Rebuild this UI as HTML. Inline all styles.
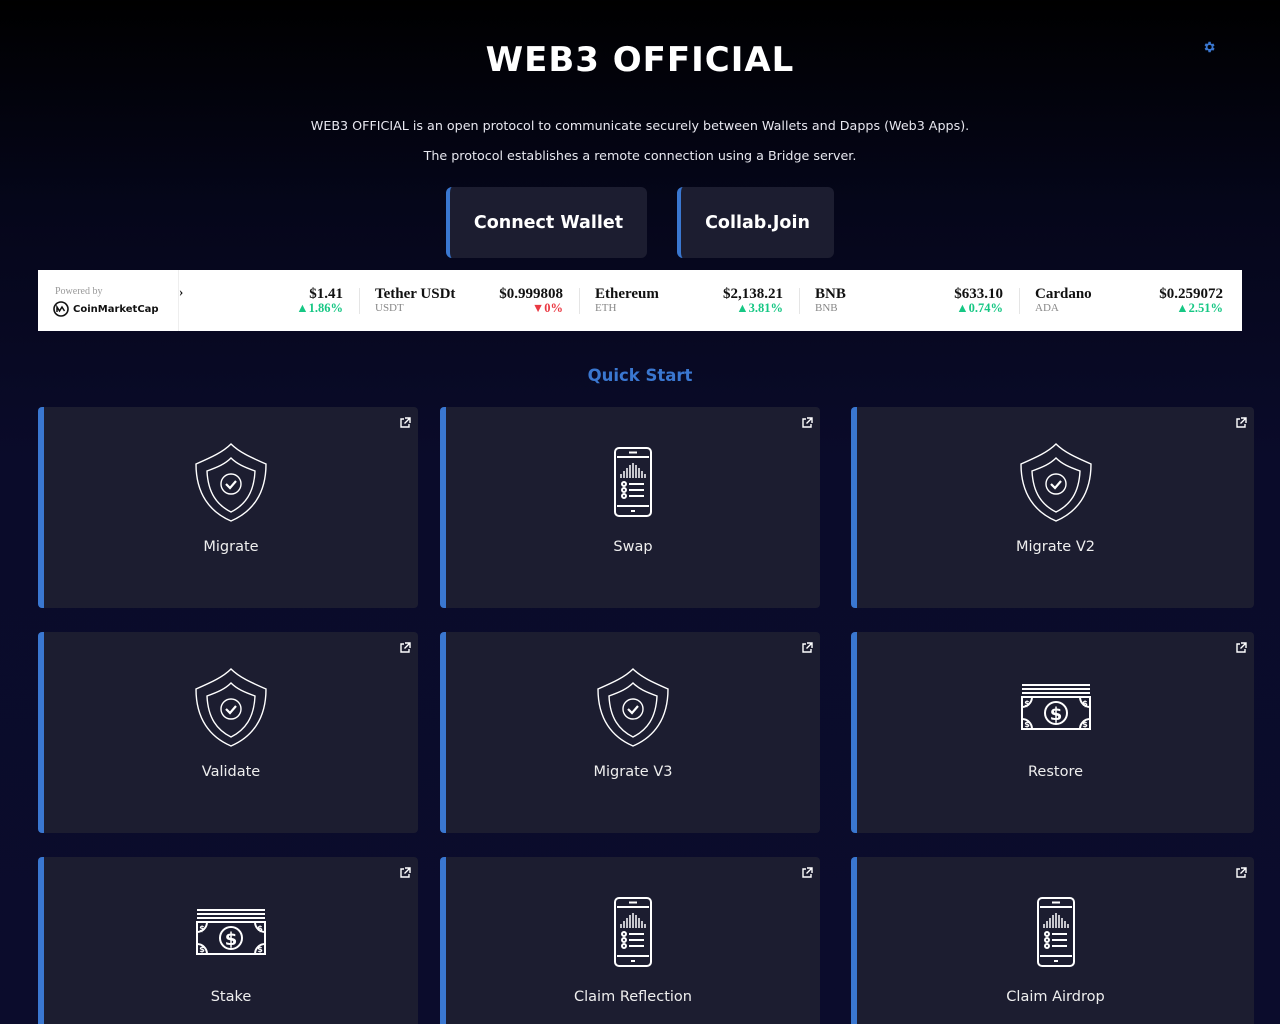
<!DOCTYPE html>
<html style="width:1280px;height:1024px;overflow:hidden"><head><meta charset="utf-8"><style>
*{margin:0;padding:0;box-sizing:border-box}
body{width:1280px;height:1024px;overflow:hidden;font-family:"DejaVu Sans","Liberation Sans",sans-serif;color:#fff;background:linear-gradient(180deg,#000 0%,#05061a 20%,#0a0b2a 45%,#0b0c2c 100%);position:relative}
h1{position:absolute;top:40px;left:0;width:1280px;text-align:center;font-size:34px;font-weight:bold;letter-spacing:1px}
.p{position:absolute;left:0;width:1280px;text-align:center;font-size:12.7px;color:#e8e8f0}
.btn{position:absolute;top:187px;height:71px;background:#1c1d30;border-left:4px solid #3a77d0;border-radius:6px;font-weight:bold;font-size:17.5px;display:flex;align-items:center;justify-content:center}
.gear{position:absolute;left:1202px;top:40px}
.tick{position:absolute;left:38px;top:270px;width:1204px;height:61px;background:#fff;font-family:"Liberation Serif",serif;color:#111}
.cmc{position:absolute;left:0;top:0;width:141px;height:61px;border-right:1px solid #eee}
.it{position:absolute;top:16px;height:30px}
.nm{position:absolute;left:0;top:0;font-weight:bold;font-size:15px;white-space:nowrap}
.sy{position:absolute;left:0;top:16px;font-size:11px;color:#888}
.pr{position:absolute;right:0;top:0;font-weight:bold;font-size:15px;white-space:nowrap}
.ch{position:absolute;right:0;top:15px;font-weight:bold;font-size:12.5px;color:#16c784;white-space:nowrap}
.ch.r{color:#ea3943}
.sep{position:absolute;top:18px;width:1px;height:26px;background:#e5e5e5}
.qs{position:absolute;top:366px;left:0;width:1280px;text-align:center;color:#3a77d0;font-weight:bold;font-size:16.5px}
.card{position:absolute;background:#1c1d30;border-left:6px solid #3a77d0;border-radius:4px;height:201px}
.card .lb{position:absolute;top:132px;left:0;right:0;text-align:center;font-size:14.5px;color:#eee}
.card .ic{position:absolute;left:50%;top:36px;transform:translateX(-50%)}
.card .ex{position:absolute;right:7px;top:10px}
</style></head><body>
<h1>WEB3 OFFICIAL</h1>
<svg class="gear" width="14" height="14" viewBox="0 0 24 24"><path fill="#3a77d0" d="M19.4 13a7.5 7.5 0 000-2l2.1-1.6-2-3.5-2.5 1a7.6 7.6 0 00-1.7-1L15 3h-4l-.4 2.7a7.6 7.6 0 00-1.7 1l-2.5-1-2 3.5L6.6 11a7.5 7.5 0 000 2l-2.1 1.6 2 3.5 2.5-1a7.6 7.6 0 001.7 1L11 21h4l.4-2.7a7.6 7.6 0 001.7-1l2.5 1 2-3.5zM13 15.5a3.5 3.5 0 110-7 3.5 3.5 0 010 7z"/></svg>
<div class="p" style="top:118px">WEB3 OFFICIAL is an open protocol to communicate securely between Wallets and Dapps (Web3 Apps).</div>
<div class="p" style="top:148px">The protocol establishes a remote connection using a Bridge server.</div>
<div class="btn" style="left:446px;width:201px">Connect Wallet</div>
<div class="btn" style="left:677px;width:157px">Collab.Join</div>
<div class="tick">
 <div class="cmc"><div style="position:absolute;left:17px;top:16px;font-size:10px;color:#999">Powered by</div>
 <div style="position:absolute;left:15px;top:31px;font-family:'DejaVu Sans',sans-serif;font-size:10px;font-weight:bold;display:flex;align-items:center;gap:4px"><svg width="16" height="16" viewBox="0 0 16 16"><circle cx="8" cy="8" r="7" fill="none" stroke="#111" stroke-width="1.6"/><path d="M4 11V6l2.5 4L9 6l2.5 4" fill="none" stroke="#111" stroke-width="1.5"/></svg>CoinMarketCap</div></div>
 <div style="position:absolute;left:141px;top:14px;font-weight:bold;font-size:13px">›</div>
 <div class="it" style="left:250px;width:55px"><div class="pr">$1.41</div><div class="ch">▲1.86%</div></div>
 <div class="sep" style="left:321px"></div>
 <div class="it" style="left:337px;width:188px"><div class="nm">Tether USDt</div><div class="sy">USDT</div><div class="pr">$0.999808</div><div class="ch r">▼0%</div></div>
 <div class="sep" style="left:541px"></div>
 <div class="it" style="left:557px;width:188px"><div class="nm">Ethereum</div><div class="sy">ETH</div><div class="pr">$2,138.21</div><div class="ch">▲3.81%</div></div>
 <div class="sep" style="left:761px"></div>
 <div class="it" style="left:777px;width:188px"><div class="nm">BNB</div><div class="sy">BNB</div><div class="pr">$633.10</div><div class="ch">▲0.74%</div></div>
 <div class="sep" style="left:981px"></div>
 <div class="it" style="left:997px;width:188px"><div class="nm">Cardano</div><div class="sy">ADA</div><div class="pr">$0.259072</div><div class="ch">▲2.51%</div></div>
</div>
<div class="qs">Quick Start</div>

<svg width="0" height="0" style="position:absolute">
<defs>
<g id="shield" fill="none" stroke="#fff" stroke-width="1.4"><path d="M36 1C28 9 17 14 1 21c0 30 14 48 35 57 21-9 35-27 35-57C55 14 44 9 36 1z"/><path d="M36 15c-6 6-13 9-24 13 1 22 10 34 24 41 14-7 23-19 24-41-11-4-18-7-24-13z"/><circle cx="36" cy="41" r="10"/><path d="M31 41l4 4 6-7" stroke-width="2.2"/></g>
<g id="phone" fill="none" stroke="#fff" stroke-width="2"><rect x="1" y="1" width="36" height="68" rx="4"/><path d="M3 10h32M3 59h32M15 5.5h8M17 64h4"/><path d="M7 31v-4M10 31v-7M13 31v-10M16 31v-13M19 31v-15M22 31v-13M25 31v-10M28 31v-7M31 31v-4" stroke-width="1.5"/><circle cx="10" cy="37" r="2"/><circle cx="10" cy="43" r="2"/><circle cx="10" cy="49" r="2"/><path d="M15 37h15M15 43h15M15 49h15"/></g>
<g id="cash"><g fill="none" stroke="#fff" stroke-width="2"><path d="M1 2h68M1 6h68M1 10h68"/><rect x="1" y="14" width="68" height="32"/><circle cx="35" cy="30" r="11"/><path d="M1 24a10 10 0 0010-10M69 24a10 10 0 01-10-10M1 36a10 10 0 0110 10M69 36a10 10 0 00-10 10"/></g><g fill="#fff" font-weight="bold" font-family="DejaVu Sans" text-anchor="middle"><text x="35" y="37" font-size="18">$</text><text x="6" y="23" font-size="8">$</text><text x="64" y="23" font-size="8">$</text><text x="6" y="44" font-size="8">$</text><text x="64" y="44" font-size="8">$</text></g></g>
<g id="ext" fill="none" stroke="#fff" stroke-width="1.4"><path d="M5 2H2v8h8V7M6 1h5v5M11 1L5.5 6.5"/></g>
</defs></svg>

<div class="card" style="left:38px;top:407px;width:380px"><svg class="ex" width="12" height="12"><use href="#ext"/></svg><svg class="ic" width="72" height="80"><use href="#shield"/></svg><div class="lb">Migrate</div></div>
<div class="card" style="left:440px;top:407px;width:380px"><svg class="ex" width="12" height="12"><use href="#ext"/></svg><svg class="ic" width="38" height="70" style="top:40px"><use href="#phone"/></svg><div class="lb">Swap</div></div>
<div class="card" style="left:851px;top:407px;width:403px"><svg class="ex" width="12" height="12"><use href="#ext"/></svg><svg class="ic" width="72" height="80"><use href="#shield"/></svg><div class="lb">Migrate V2</div></div>

<div class="card" style="left:38px;top:632px;width:380px"><svg class="ex" width="12" height="12"><use href="#ext"/></svg><svg class="ic" width="72" height="80"><use href="#shield"/></svg><div class="lb">Validate</div></div>
<div class="card" style="left:440px;top:632px;width:380px"><svg class="ex" width="12" height="12"><use href="#ext"/></svg><svg class="ic" width="72" height="80"><use href="#shield"/></svg><div class="lb">Migrate V3</div></div>
<div class="card" style="left:851px;top:632px;width:403px"><svg class="ex" width="12" height="12"><use href="#ext"/></svg><svg class="ic" width="70" height="47" style="top:51px"><use href="#cash"/></svg><div class="lb">Restore</div></div>

<div class="card" style="left:38px;top:857px;width:380px"><svg class="ex" width="12" height="12"><use href="#ext"/></svg><svg class="ic" width="70" height="47" style="top:51px"><use href="#cash"/></svg><div class="lb">Stake</div></div>
<div class="card" style="left:440px;top:857px;width:380px"><svg class="ex" width="12" height="12"><use href="#ext"/></svg><svg class="ic" width="38" height="70" style="top:40px"><use href="#phone"/></svg><div class="lb">Claim Reflection</div></div>
<div class="card" style="left:851px;top:857px;width:403px"><svg class="ex" width="12" height="12"><use href="#ext"/></svg><svg class="ic" width="38" height="70" style="top:40px"><use href="#phone"/></svg><div class="lb">Claim Airdrop</div></div>
</body></html>
